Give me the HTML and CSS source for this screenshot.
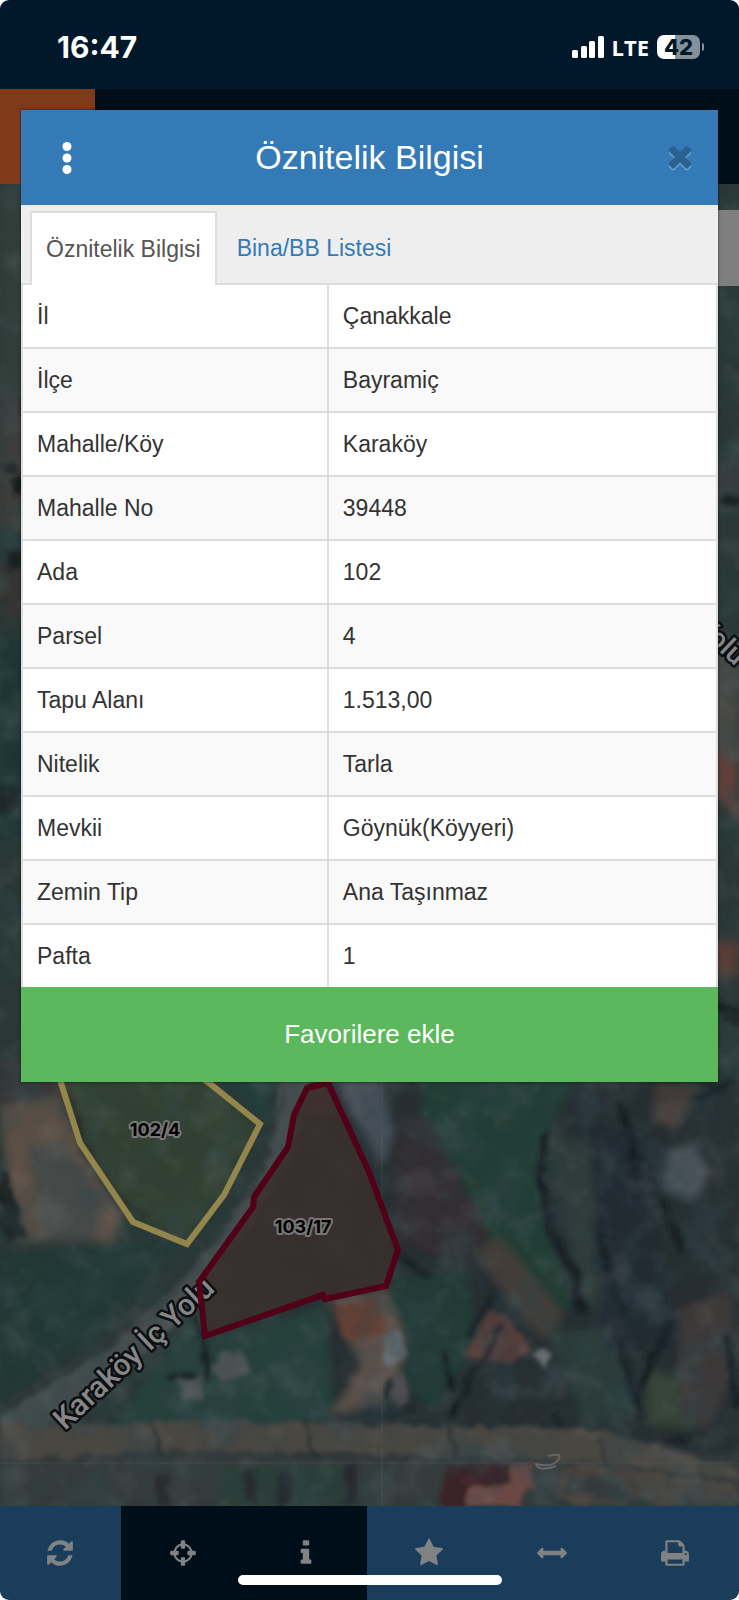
FILE: index.html
```html
<!DOCTYPE html>
<html lang="tr">
<head>
<meta charset="utf-8">
<meta name="viewport" content="width=device-width, initial-scale=1">
<title>Öznitelik Bilgisi</title>
<link rel="stylesheet" href="styles.css">
</head>
<body>
<div class="screen">
  <div class="status">
    <span class="status-time">16:47</span>
    <div class="status-right">
      <svg class="signal" viewBox="0 0 32 22" aria-hidden="true"><rect x="0" y="14" width="6" height="8" rx="1.5"/><rect x="9" y="10" width="6" height="12" rx="1.5"/><rect x="17" y="5" width="6" height="17" rx="1.5"/><rect x="26" y="0" width="6" height="22" rx="1.5"/></svg>
      <span class="network">LTE</span>
      <div class="battery-group"><span class="battery">42</span><span class="battery-tip"></span></div>
    </div>
  </div>
  <div class="appbar"><div class="appbar-menu"></div></div>

  <main class="map">
    <svg class="map-art" viewBox="0 184 739 1322" preserveAspectRatio="xMidYMax slice" role="img" aria-label="Uydu haritası">
      <defs>
        <filter id="soft" x="-5%" y="-5%" width="110%" height="110%"><feGaussianBlur stdDeviation="4"/></filter>
        <filter id="fine" x="-5%" y="-5%" width="110%" height="110%"><feTurbulence type="fractalNoise" baseFrequency="0.06" numOctaves="2" seed="3"/><feDisplacementMap in="SourceGraphic" scale="12" xChannelSelector="R" yChannelSelector="G"/><feGaussianBlur stdDeviation="2"/></filter>
        <filter id="grain" x="0" y="0" width="100%" height="100%"><feTurbulence type="fractalNoise" baseFrequency="0.025" numOctaves="4" seed="8"/><feColorMatrix values="0 0 0 0 0.03  0 0 0 0 0.06  0 0 0 0 0.07  0 2.6 0 0 -1.1"/></filter>
        <filter id="light" x="0" y="0" width="100%" height="100%"><feTurbulence type="fractalNoise" baseFrequency="0.03" numOctaves="3" seed="21"/><feColorMatrix values="0 0 0 0 0.45  0 0 0 0 0.45  0 0 0 0 0.45  2.4 0 0 0 -1.15"/></filter>
      </defs>
      <rect x="0" y="184" width="739" height="1322" fill="#293835"/>
      <g filter="url(#soft)">
        <path fill="#303c38" d="M0 184h40v230H0z"/>
        <path fill="#3d3d3a" d="M0 390h40v140H0z"/>
        <path fill="#1f3432" d="M0 640h40v200H0z"/>
        <path fill="#36322f" d="M0 560h30v60H0z"/>
        <path fill="#393d43" d="M700 460h39v50h-39z"/>
        <path fill="#494844" d="M700 640h39v130h-39z"/>
        <path fill="#634138" d="M700 740l39 30v50l-39-40z"/>
        <path fill="#573a32" d="M700 940h39v35h-39z"/>
        <path fill="#393435" d="M0 1060h70l10 40-80 10z"/>
        <path fill="#5b5045" d="M0 1107l58-12 24 52 40 68-10 26H14z"/>
        <path fill="#444846" d="M28 1150l35-10 40 60-8 40H45z"/>
        <path fill="#223836" d="M0 1255l100-10 80-4-84 90L0 1404z"/>
        <path fill="#2f3e31" d="M64 1080h140l52 44-35 68-34 48-52-20-50-70z"/>
        <path fill="#203d3a" d="M218 1078h56l-8 42z"/>
        <path fill="#252e30" d="M280 1080h459v426H280z"/>
        <path fill="#223c35" d="M420 1080h155l-24 45-8 90 30 95-45-5-75-130-30-50z"/>
        <path fill="#2d3a37" d="M545 1140h65l25 100 20 120-70-60z"/>
        <path fill="#332f31" d="M400 1110l30 10 60 115-26 34-72-32z"/>
        <path fill="#423d38" d="M474 1255l25-20 65 80-20 25z"/>
        <path fill="#454e56" d="M333 1078h48l12 55-10 34z"/>
        <path fill="#26403a" d="M214 1340l110-35 10 100-20 28H110l85-120z"/>
        <path fill="#233b36" d="M392 1280l75-10 10 70-40 70-60-40z"/>
        <path fill="#5a5048" d="M328 1300l58-10 20 50-14 60-60 15 30-50z"/>
        <path fill="#2a3b38" d="M550 1330h60l34 80-60 15z"/>
        <path fill="#354438" d="M645 1370l45 10 8 48-50-4z"/>
        <path fill="#222c33" d="M590 1120l55 20 10 70 20 140-70 0-10-90z"/>
        <path fill="#4c525a" d="M668 1150l26-5 15 26-16 30-28-12z"/>
        <path fill="#423b39" d="M655 1085h44l-20 42-22-4z"/>
        <path fill="#3d3938" d="M680 1310l50-20 9 70-30 70-30-20z"/>
        <path fill="#363a3b" d="M0 1455h739v51H0z"/>
        <path fill="#2a3d39" d="M220 1465h125v41H220z"/>
      </g>
      <g filter="url(#fine)">
        <path fill="#454d4d" d="M280 1075h30l-13 72-46 79-92 118L0 1457v-42l110-66 105-106 55-87z"/>
        <path fill="#484643" d="M0 1425l210-4 170 4 220 4 139 42v35h-80l-90-44-250-8-150-4-169 12z"/>
        <path fill="none" stroke="#34383a" stroke-width="3" d="M288 1080l-28 100-106 136L0 1407M0 1460l300-7 300 10 139 20"/>
        <path fill="#573a37" d="M302 1092l23-5 12 23-40 10z"/>
        <path fill="#633f36" d="M335 1307l43-12 7 38-43 7z"/>
        <path fill="#573b38" d="M466 1355l26-46 16 10 24 34-22 10-26-6z"/>
        <path fill="#6a4a45" d="M459 1485l30-19 45-2-1 22-16 20h-59z"/>
        <path fill="#3a2425" d="M444 1465l67-2v20l-43 6-4 17h-21z"/>
        <path fill="#4b5153" d="M218 1353l22-3 12 23-32 8-8-12zM178 1380l20-6 6 26-22 2z"/>
        <path fill="#626b70" d="M534 1358l10-10 11 10-10 8zM383 1335l18-4 4 28-20 8z"/>
        <path fill="#4b494b" d="M390 1375l16-4 4 32-16 2z"/>
        <g fill="none" stroke="#151d20" stroke-linecap="round">
          <path stroke-width="8" d="M545 1135l-4 45 9 50 24 45 8 34M603 1239l12 50 7 18M621 1107l17 64"/>
          <path stroke="#262a24" stroke-width="7" d="M70 1095l14 50 34 54 26 16"/>
          <path stroke-width="5" d="M469 1335l25-43M442 1355l10 34M500 1325l-50 90M196 1320l8 20 3 40M170 1378l25-3M400 1256l25 20M390 1378l-4 28M556 1400l3 25"/>
          <path stroke-width="7" d="M615 1325l25 90M670 1320l-30 65M664 1440l22-2M727 1340l10 65M650 1170l32 80M694 1100l34-18"/>
          <path stroke-width="2" d="M369 1415l45-5M151 1422l10 32M305 1420l10 42M447 1425l8 28M599 1440l12 30M333 1306l9 30"/>
        </g>
        <path fill="#141b1d" d="M2 465l12-4 4 12-12 2zM10 480l20-5v14l-18 4zM8 554l15-4v16l-14 4zM18 400l12-4v16l-8 4zM0 785l20 4-4 20-16 4zM0 1170l10 6 14 60-14 8-10-20zM720 496h19v10h-19zM720 1000l19 12v15l-19-8z"/>
        <path fill="none" stroke="#4b403b" stroke-width="6" d="M565 1472l62 2 12 16-20 14-60-8z"/>
        <path fill="#282c2e" d="M155 1475h14v31h-14zM245 1470h10v36h-10zM280 1470h10v36h-10zM345 1465h12v41h-12z"/>
      </g>
      <rect x="0" y="184" width="739" height="1322" filter="url(#grain)" opacity=".5"/>
      <rect x="0" y="184" width="739" height="1322" filter="url(#light)" opacity=".12"/>
      <path d="M0 1463h739M382 1080v426" stroke="#687070" stroke-opacity=".25"/>
      <path d="M548 1456q16-4 10 4t-22 4q2 8 20 2" fill="none" stroke="#666" stroke-width="2"/>
      <path class="parcel-selected" d="M50 1040l11 43 19 60 53 79 54 22 37-49 36-71-51-41-60-43z"/>
      <path class="parcel-shade" d="M307 1088l21-5 41 89 29 78-12 36-61 13-2-4-118 41-6-54 54-75 1-10 34-50 6-32z"/>
      <text class="road-label" transform="translate(65 1431) rotate(-43)">Karaköy İç Yolu</text>
      <text class="road-label road-label-small" transform="translate(695 629) rotate(43)">Yolu</text>
      <path class="parcel-marked" d="M307 1088l21-5 41 89 29 78-12 36-61 13-2-4-118 41-6-54 54-75 1-10 34-50 6-32z"/>
      <text class="parcel-label" x="155" y="1136">102/4</text>
      <text class="parcel-label" x="303" y="1233">103/17</text>
      <rect x="707" y="210" width="32" height="76" fill="#7f7f7f"/>
    </svg>
  </main>

  <nav class="toolbar" aria-label="Harita araçları">
    <button class="tool" type="button" aria-label="Yenile"><svg class="icon" viewBox="0 0 1792 1792"><path d="M1639 1056q0 5-1 7-64 268-268 434.500t-478 166.500q-146 0-282.500-55t-243.500-157l-129 129q-19 19-45 19t-45-19-19-45v-448q0-26 19-45t45-19h448q26 0 45 19t19 45-19 45l-137 137q71 66 161 102t187 36q134 0 250-65t186-179q11-17 53-117 8-23 30-23h192q13 0 22.500 9.500t9.500 22.500zm25-800v448q0 26-19 45t-45 19h-448q-26 0-45-19t-19-45 19-45l138-138q-148-137-349-137-134 0-250 65t-186 179q-11 17-53 117-8 23-30 23h-199q-13 0-22.500-9.500t-9.500-22.500v-7q65-268 270-434.500t480-166.500q146 0 284 55.500t245 156.500l130-129q19-19 45-19t45 19 19 45z"/></svg></button>
    <button class="tool tool-dark" type="button" aria-label="Konum"><svg class="icon" viewBox="0 0 1792 1792"><path d="M1325 1024h-109q-26 0-45-19t-19-45v-128q0-26 19-45t45-19h109q-32-108-112.500-188.500t-188.500-112.500v109q0 26-19 45t-45 19h-128q-26 0-45-19t-19-45v-109q-108 32-188.500 112.500t-112.500 188.500h109q26 0 45 19t19 45v128q0 26-19 45t-45 19h-109q32 108 112.500 188.500t188.500 112.500v-109q0-26 19-45t45-19h128q26 0 45 19t19 45v109q108-32 188.500-112.500t112.500-188.500zm339-192v128q0 26-19 45t-45 19h-143q-37 161-154.500 278.500t-278.500 154.500v143q0 26-19 45t-45 19h-128q-26 0-45-19t-19-45v-143q-161-37-278.500-154.500t-154.500-278.500h-143q-26 0-45-19t-19-45v-128q0-26 19-45t45-19h143q37-161 154.500-278.500t278.500-154.500v-143q0-26 19-45t45-19h128q26 0 45 19t19 45v143q161 37 278.500 154.500t154.500 278.500h143q26 0 45 19t19 45z"/></svg></button>
    <button class="tool tool-dark" type="button" aria-label="Bilgi"><svg class="icon" viewBox="0 0 1792 1792"><path d="M1216 1344v128q0 26-19 45t-45 19h-512q-26 0-45-19t-19-45v-128q0-26 19-45t45-19h64v-384h-64q-26 0-45-19t-19-45v-128q0-26 19-45t45-19h384q26 0 45 19t19 45v576h64q26 0 45 19t19 45zm-128-1152v192q0 26-19 45t-45 19h-256q-26 0-45-19t-19-45v-192q0-26 19-45t45-19h256q26 0 45 19t19 45z"/></svg></button>
    <button class="tool" type="button" aria-label="Favoriler"><svg class="icon" viewBox="0 0 1792 1792"><path d="M1728 647q0 22-26 48l-363 354 86 500q1 7 1 20 0 21-10.500 35.500t-30.500 14.500q-19 0-40-12l-449-236-449 236q-22 12-40 12-21 0-31.500-14.500t-10.500-35.500q0-6 2-20l86-500-364-354q-25-27-25-48 0-37 56-46l502-73 225-455q19-41 49-41t49 41l225 455 502 73q56 9 56 46z"/></svg></button>
    <button class="tool" type="button" aria-label="Ölç"><svg class="icon" viewBox="0 0 1792 1792"><path d="M1792 896q0 26-19 45l-256 256q-19 19-45 19t-45-19-19-45v-128h-1024v128q0 26-19 45t-45 19-45-19l-256-256q-19-19-19-45t19-45l256-256q19-19 45-19t45 19 19 45v128h1024v-128q0-26 19-45t45-19 45 19l256 256q19 19 19 45z"/></svg></button>
    <button class="tool" type="button" aria-label="Yazdır"><svg class="icon" viewBox="0 0 1792 1792"><path fill-rule="evenodd" d="M448 1536h896v-256h-896v256zm0-640h896v-384h-160q-40 0-68-28t-28-68v-160h-640v640zm1152 64q0-26-19-45t-45-19-45 19-19 45 19 45 45 19 45-19 19-45zm128 0v416q0 13-9.500 22.500t-22.500 9.500h-224v160q0 40-28 68t-68 28h-960q-40 0-68-28t-28-68v-160h-224q-13 0-22.500-9.500t-9.500-22.500v-416q0-79 56.500-135.500t135.500-56.500h64v-544q0-40 28-68t68-28h672q40 0 88 20t76 48l152 152q28 28 48 76t20 88v256h64q79 0 135.500 56.500t56.500 135.500z"/></svg></button>
  </nav>

  <section class="dialog" role="dialog" aria-labelledby="dialog-title">
    <header class="dialog-head">
      <button class="head-button" type="button" aria-label="Menü"><svg class="dots" viewBox="0 0 10 32"><circle cx="5" cy="4.500" r="4.500"/><circle cx="5" cy="16" r="4.500"/><circle cx="5" cy="27.500" r="4.500"/></svg></button>
      <h1 class="dialog-title" id="dialog-title">Öznitelik Bilgisi</h1>
      <button class="head-button" type="button" aria-label="Kapat"><svg class="close" viewBox="0 0 1792 1792"><path d="M1490 1322q0 40-28 68l-136 136q-28 28-68 28t-68-28l-294-294-294 294q-28 28-68 28t-68-28l-136-136q-28-28-28-68t28-68l294-294-294-294q-28-28-28-68t28-68l136-136q28-28 68-28t68 28l294 294 294-294q28-28 68-28t68 28l136 136q28 28 28 68t-28 68l-294 294 294 294q28 28 28 68z"/></svg></button>
    </header>
    <div class="tabs" role="tablist">
      <button class="tab tab-active" type="button" role="tab" aria-selected="true">Öznitelik Bilgisi</button>
      <button class="tab" type="button" role="tab" aria-selected="false">Bina/BB Listesi</button>
    </div>
    <table class="attributes">
      <tbody>
        <tr><th scope="row">İl</th><td>Çanakkale</td></tr>
        <tr><th scope="row">İlçe</th><td>Bayramiç</td></tr>
        <tr><th scope="row">Mahalle/Köy</th><td>Karaköy</td></tr>
        <tr><th scope="row">Mahalle No</th><td>39448</td></tr>
        <tr><th scope="row">Ada</th><td>102</td></tr>
        <tr><th scope="row">Parsel</th><td>4</td></tr>
        <tr><th scope="row">Tapu Alanı</th><td>1.513,00</td></tr>
        <tr><th scope="row">Nitelik</th><td>Tarla</td></tr>
        <tr><th scope="row">Mevkii</th><td>Göynük(Köyyeri)</td></tr>
        <tr><th scope="row">Zemin Tip</th><td>Ana Taşınmaz</td></tr>
        <tr><th scope="row">Pafta</th><td>1</td></tr>
      </tbody>
    </table>
    <button class="favorite" type="button">Favorilere ekle</button>
  </section>
  <div class="home-indicator"></div>
</div>
</body>
</html>
```
FILE: styles.css
```css
* { box-sizing: border-box; }

body {
  margin: 0;
  background: #fff;
  font-family: "Liberation Sans", Arial, sans-serif;
  font-size: 23px;
  color: #333;
}

button {
  margin: 0;
  padding: 0;
  border: 0;
  background: none;
  font: inherit;
  cursor: pointer;
}

.screen {
  position: relative;
  display: flex;
  flex-direction: column;
  min-height: 100vh;
  border-radius: 9px;
  overflow: hidden;
}

.status {
  display: flex;
  align-items: center;
  justify-content: space-between;
  height: 89px;
  padding: 5px 35px 0 57px;
  background: #001829;
  color: #fff;
  font-family: Inter, sans-serif;
}

.status-time { font-size: 30px; font-weight: 700; }
.status-right { display: flex; align-items: center; gap: 8px; }
.signal { width: 32px; height: 22px; fill: #fff; }
.network { font-family: "Open Sans", sans-serif; font-weight: 700; font-size: 22px; line-height: 22px; }
.battery-group { display: flex; align-items: center; gap: 2px; }

.battery {
  width: 43px;
  border-radius: 7px;
  background: linear-gradient(90deg, #fff 43%, #84909a 43%);
  color: #001829;
  font-size: 22px;
  font-weight: 800;
  line-height: 24px;
  text-align: center;
}

.battery-tip { width: 2px; height: 8px; border-radius: 0 2px 2px 0; background: #84909a; }

.appbar { height: 95px; background: #000e19; }
.appbar-menu { width: 95px; height: 100%; background: #7f391b; }

.map { position: relative; flex: 1; overflow: hidden; }
.map-art { position: absolute; inset: 0; width: 100%; height: 100%; }
.parcel-selected { fill: #6a7a38; fill-opacity: .06; stroke: #94854d; stroke-width: 6; }
.parcel-shade { fill: #3a2f2d; fill-opacity: .85; }
.parcel-marked { fill: none; stroke: #510018; stroke-width: 6; }

.road-label {
  font-family: Roboto, sans-serif;
  font-size: 30px;
  font-weight: 500;
  fill: #868686;
  stroke: #0b0f12;
  stroke-width: 5px;
  stroke-linejoin: round;
  paint-order: stroke;
}

.road-label-small { font-size: 28px; }

.parcel-label {
  font-family: Inter, sans-serif;
  font-size: 18px;
  font-weight: 700;
  text-anchor: middle;
  fill: #000;
  stroke: #777;
  stroke-width: 4px;
  stroke-linejoin: round;
  paint-order: stroke;
}

.toolbar {
  display: grid;
  grid-template-columns: repeat(6, 1fr);
  height: 94px;
  margin-left: -2px;
  padding-right: 2px;
  background: #1a3d5b;
}

.tool { display: flex; align-items: center; justify-content: center; }
.tool-dark { background: #000e19; }
.icon { width: 30px; height: 30px; fill: #808284; }

.dialog {
  position: absolute;
  top: 110px;
  left: 21px;
  right: 21px;
  background: #fff;
  box-shadow: 0 0 3px #0008;
}

.dialog-head {
  display: flex;
  align-items: center;
  justify-content: space-between;
  height: 95px;
  background: #337ab7;
  color: #fff;
}

.head-button { display: flex; align-items: center; justify-content: center; width: 92px; height: 93px; }
.dots { width: 10px; height: 32px; fill: #fff; }
.close { width: 34px; height: 34px; margin: 0 0 4px 16px; fill: #29628f; filter: drop-shadow(0 2px 0 #6ba0cd); }
.dialog-title { margin: 0; font-size: 34px; font-weight: 400; }

.tabs {
  display: flex;
  height: 80px;
  padding: 6px 9px 0;
  background: #eee;
}

.tab { height: 74px; padding: 0 20px; color: #337ab7; }
.tab-active { padding: 0 14px; border: 2px solid #ddd; border-bottom: 0; background: #fff; color: #555; }

.attributes { width: 100%; margin-top: -2px; border-collapse: collapse; table-layout: fixed; }
.attributes th,
.attributes td {
  height: 64px;
  padding: 0 14px;
  border: 2px solid #ddd;
  font-weight: 400;
  text-align: left;
}
.attributes th { width: 44%; }
.attributes tr:nth-child(odd) { background: #fff; }
.attributes tr:nth-child(even) { background: #f9f9f9; }

.favorite { display: block; width: 100%; height: 95px; margin-top: -2px; background: #5cb85c; color: #fff; font-size: 26px; }

.home-indicator {
  position: absolute;
  bottom: 15px;
  left: 50%;
  width: 264px;
  height: 10px;
  margin-left: -132px;
  border-radius: 5px;
  background: #fff;
}
```
